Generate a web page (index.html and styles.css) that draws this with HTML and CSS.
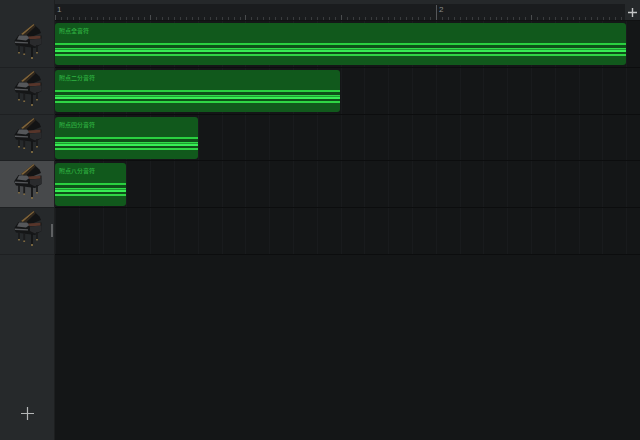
FILE: index.html
```html
<!DOCTYPE html>
<html>
<head>
<meta charset="utf-8">
<link rel="stylesheet" href="styles.css">
</head>
<body>

<svg class="defs" width="0" height="0">
    <symbol id="piano" viewBox="12 6 30 38">
        <!-- lid -->
        <polygon points="20,17 32.5,7 38.5,12.5 40,16 30,20 24,20" fill="#121314"/>
        <polygon points="20,17 32.5,7 33.5,8 22,18" fill="#7d6239"/>
        <polygon points="22,18 33.5,8 34.5,9.5 25,18.5" fill="#2e261d"/>
        <!-- body -->
        <polygon points="13,24.5 17.5,18 28,20 40.5,18.5 40.5,27 34,31 15,28.5" fill="#151617"/>
        <polygon points="18,18.5 26,18.5 28.5,21 25,23.5 16,22.5" fill="#55575a"/>
        <polygon points="27,19.5 39.5,18.8 39.5,21.8 28.5,22.3" fill="#57352a"/>
        <polygon points="13.5,24.5 27,25.2 27,26.4 14,26" fill="#55575a"/>
        <polygon points="29,22.5 40.5,21.5 40.5,27 34,29.5 29,27" fill="#2a2b2d"/>
        <!-- legs -->
        <g stroke-width="1.8" fill="none">
            <path d="M18 28V35" stroke="#1a1b1c"/>
            <path d="M23.2 29V36.5" stroke="#1a1b1c"/>
            <path d="M31 30V40" stroke="#141516"/>
            <path d="M36 28V35" stroke="#1a1b1c"/>
            <path d="M18 35V36.5M23.2 36.5V38M31 40V42M36 35V36.5" stroke="#7f6a40"/>
        </g>
    </symbol>
</svg>

<div class="app">
    <div class="sidebar">
        <div class="side-top"></div>
        <div class="head"><svg class="piano"><use href="#piano"/></svg></div>
        <div class="head"><svg class="piano"><use href="#piano"/></svg></div>
        <div class="head"><svg class="piano"><use href="#piano"/></svg></div>
        <div class="head selected"><svg class="piano"><use href="#piano"/></svg></div>
        <div class="head"><svg class="piano"><use href="#piano"/></svg><span class="grip"></span></div>
        <div class="add-track">
            <svg width="13" height="13" viewBox="0 0 13 13"><path d="M6.5 0V13M0 6.5H13" stroke="#b4b6b7" stroke-width="1.2"/></svg>
        </div>
    </div>

    <div class="main">
        <div class="top-strip"></div>
        <div class="ruler">
            <div class="ticks">
                <span class="bar-no">1</span>
                <span class="bar-line"></span>
                <span class="bar-no second">2</span>
            </div>
            <div class="add-bar">
                <svg width="9" height="9" viewBox="0 0 9 9"><path d="M4.5 0V9M0 4.5H9" stroke="#c4c5c6" stroke-width="1.4"/></svg>
            </div>
        </div>
        <div class="lane">
            <div class="region" style="width:571px">
                <div class="title">附点全音符</div>
                <div class="notes"></div>
            </div>
        </div>
        <div class="lane">
            <div class="region" style="width:285px">
                <div class="title">附点二分音符</div>
                <div class="notes"></div>
            </div>
        </div>
        <div class="lane">
            <div class="region" style="width:142.5px">
                <div class="title">附点四分音符</div>
                <div class="notes"></div>
            </div>
        </div>
        <div class="lane">
            <div class="region" style="width:71px">
                <div class="title">附点八分音符</div>
                <div class="notes"></div>
            </div>
        </div>
        <div class="lane"></div>
    </div>
</div>

</body>
</html>
```

FILE: styles.css
```css
* {
    box-sizing: border-box;
}

html, body {
    margin: 0;
    height: 100%;
    background-color: #141617;
    overflow: hidden;
}

.defs {
    display: block;
    height: 0;
}

.app {
    display: flex;
    height: 440px;
}

.sidebar {
    width: 55px;
    flex: none;
    display: flex;
    flex-direction: column;
    background-color: #26292b;
    border-right: 1px solid #1d1f20;
}

.side-top {
    height: 21px;
    flex: none;
}

.head {
    height: 46.75px;
    flex: none;
    position: relative;
    display: flex;
    justify-content: center;
    padding-top: 2px;
    border-bottom: 1px solid #1e2022;
}

.head.selected {
    background-color: #47494b;
}

.piano {
    width: 30px;
    height: 38px;
    margin-left: 1px;
}

.grip {
    position: absolute;
    left: 51px;
    top: 16px;
    width: 2px;
    height: 13px;
    background-color: #5e6062;
}

.add-track {
    margin-top: auto;
    height: 33px;
    display: flex;
    justify-content: center;
}

.main {
    flex: 1;
    min-width: 0;
    background-color: #141617;
}

.top-strip {
    height: 4px;
    background-color: #25282a;
}

.ruler {
    height: 17px;
    display: flex;
    background-color: #1a1c1e;
    border-bottom: 1px solid #101112;
}

.ticks {
    width: 570px;
    position: relative;
    /* bar 381px: quarter tick every 95.25, small tick every 5.95 */
    background-image:
        repeating-linear-gradient(90deg, #4a4c4e 0, #4a4c4e 1px, transparent 1px, transparent 95.25px),
        repeating-linear-gradient(90deg, #3a3c3e 0, #3a3c3e 1px, transparent 1px, transparent 5.953px);
    background-size: 100% 5px, 100% 3px;
    background-position: 0 11px, 0 13px;
    background-repeat: no-repeat;
}

.bar-no {
    position: absolute;
    left: 2px;
    top: 0;
    font: 8px "Liberation Sans", sans-serif;
    line-height: 11px;
    color: #8a8c8d;
}

.bar-no.second {
    left: 384px;
}

.bar-line {
    position: absolute;
    left: 381px;
    top: 1px;
    width: 1px;
    height: 15px;
    background-color: #55575a;
}

.add-bar {
    flex: 1;
    background-color: #25282a;
    display: flex;
    justify-content: center;
    align-items: center;
    padding-right: 1px;
}

.lane {
    height: 46.75px;
    padding-top: 2px;
    border-bottom: 1px solid #0c0d0e;
    background-image: repeating-linear-gradient(90deg, #191b1d 0, #191b1d 1px, transparent 1px, transparent 23.8px);
}

.region {
    height: 42.25px;
    border-radius: 3px;
    background-color: #11591c;
    overflow: hidden;
}

.title {
    height: 20px;
    padding: 4px 0 0 4px;
    font: 500 6px "Noto Sans CJK SC", "Liberation Sans", sans-serif;
    line-height: 8px;
    color: #2fb141;
    white-space: nowrap;
}

/* note bars, one per pitch */
.notes {
    height: 14px;
    background-image: linear-gradient(
        #2ad040 0 2px,
        #0f5019 2px 5px,
        #2fdc48 5px 6px,
        #1f9a32 6px 7px,
        #38ee55 7px 9px,
        #0f5019 9px 11px,
        #2fd545 11px 13px,
        #11591c 13px 14px
    );
}
```
